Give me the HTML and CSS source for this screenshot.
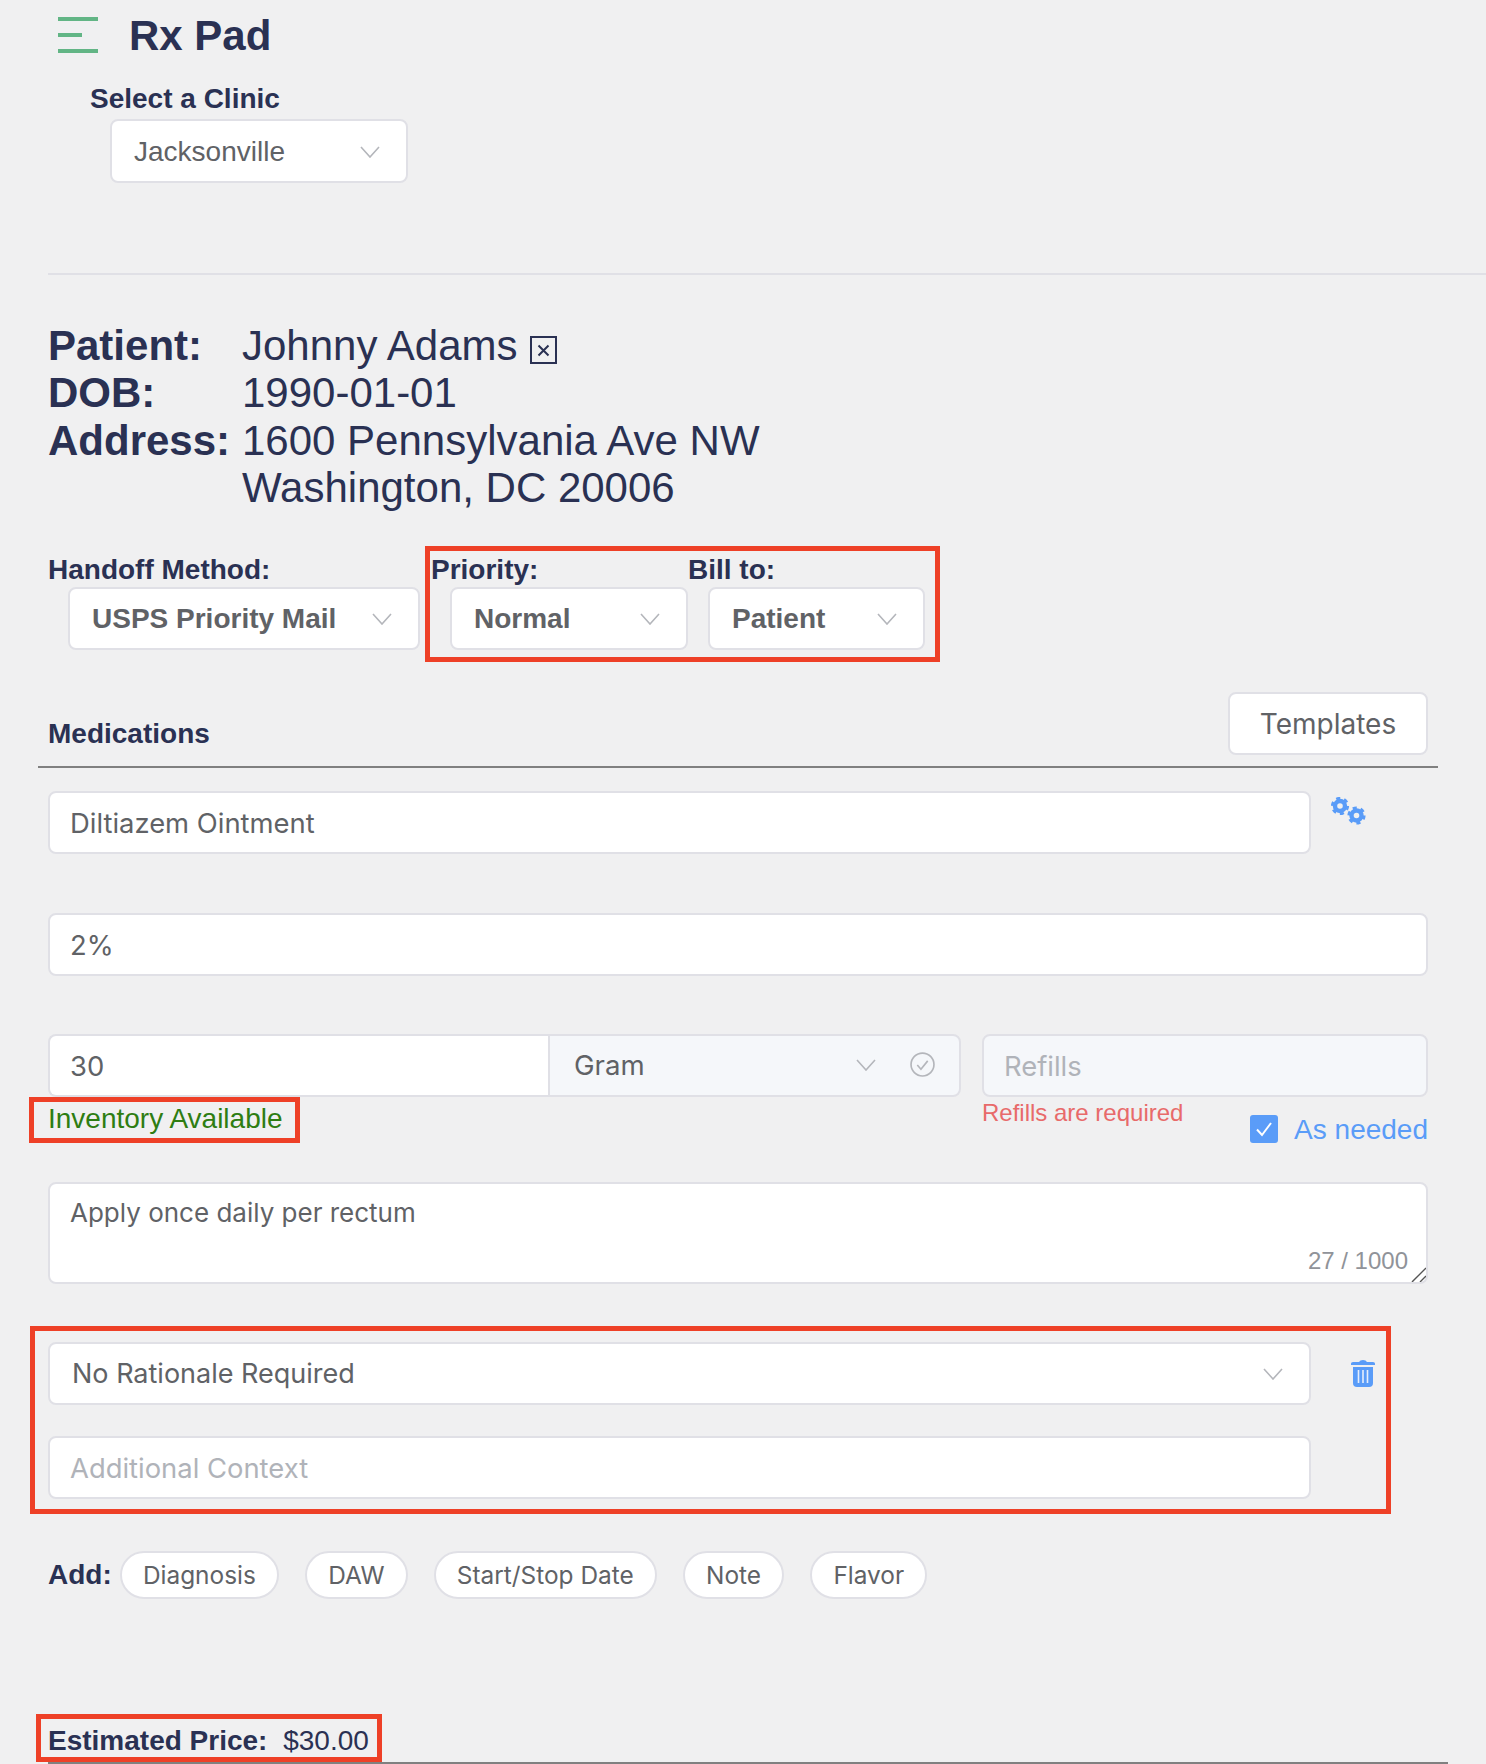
FILE: index.html
```html
<!DOCTYPE html>
<html lang="en">
<head>
    <meta charset="UTF-8">
    <meta name="viewport" content="width=device-width, initial-scale=1.0">
    <title>Rx Pad</title>
    <link rel="stylesheet" href="styles.css">
</head>
<body>
    <div class="page">
        <div class="topbar">
            <svg class="menu-icon" width="40" height="36" viewBox="0 0 40 36">
                <rect x="0" y="0" width="40" height="4" fill="#62b585"/>
                <rect x="0" y="16" width="24" height="4" fill="#62b585"/>
                <rect x="0" y="32" width="40" height="4" fill="#62b585"/>
            </svg>
            <h1>Rx Pad</h1>
        </div>

        <div class="clinic-label">Select a Clinic</div>
        <div class="select clinic-select">
            <span>Jacksonville</span>
            <svg class="chevron" viewBox="0 0 20 12"><path d="M1 1l9 10 9-10"/></svg>
        </div>

        <div class="divider"></div>

        <div class="patient">
            <div class="patient-key">Patient:</div>
            <div class="patient-val">Johnny Adams
                <svg class="close-box" width="27" height="28" viewBox="0 0 27 28">
                    <rect x="1" y="1" width="25" height="26" fill="none" stroke="#2a3153" stroke-width="2"/>
                    <path d="M8.500 9.500l10 10m0-10l-10 10" stroke="#2a3153" stroke-width="2"/>
                </svg>
            </div>
            <div class="patient-key">DOB:</div>
            <div class="patient-val">1990-01-01</div>
            <div class="patient-key">Address:</div>
            <div class="patient-val">1600 Pennsylvania Ave NW<br>Washington, DC 20006</div>
        </div>

        <div class="order-row">
            <div class="order-col handoff">
                <label>Handoff Method:</label>
                <div class="select bold-select">
                    <span>USPS Priority Mail</span>
                    <svg class="chevron" viewBox="0 0 20 12"><path d="M1 1l9 10 9-10"/></svg>
                </div>
            </div>
            <div class="order-col priority">
                <label>Priority:</label>
                <div class="select bold-select">
                    <span>Normal</span>
                    <svg class="chevron" viewBox="0 0 20 12"><path d="M1 1l9 10 9-10"/></svg>
                </div>
            </div>
            <div class="order-col bill">
                <label>Bill to:</label>
                <div class="select bold-select">
                    <span>Patient</span>
                    <svg class="chevron" viewBox="0 0 20 12"><path d="M1 1l9 10 9-10"/></svg>
                </div>
            </div>
        </div>

        <div class="med-header">
            <span class="med-title">Medications</span>
            <button class="templates">Templates</button>
        </div>

        <div class="form-row first-row">
            <div class="input wide">Diltiazem Ointment</div>
            <svg class="gears" width="36" height="29" viewBox="0 0 36 29">
                <g fill="none" stroke="#5a9cf8">
                    <circle cx="9" cy="9" r="5" stroke-width="4.4"/>
                    <circle cx="9" cy="9" r="7.6" stroke-width="3" stroke-dasharray="4 3.96"/>
                    <circle cx="25.5" cy="18.5" r="5" stroke-width="4.4"/>
                    <circle cx="25.5" cy="18.5" r="7.6" stroke-width="3" stroke-dasharray="4 3.96"/>
                </g>
            </svg>
        </div>

        <div class="input strength">2%</div>

        <div class="qty-row">
            <div class="qty-left">
                <div class="qty-group">
                    <div class="input qty">30</div>
                    <div class="select unit">
                        <span>Gram</span>
                        <svg class="chevron" viewBox="0 0 20 12"><path d="M1 1l9 10 9-10"/></svg>
                        <svg class="check-circle" width="25" height="25" viewBox="0 0 24 24">
                            <circle cx="12" cy="12" r="11" fill="none" stroke="#b4b6bb" stroke-width="1.6"/>
                            <path d="M7 12.5l3.5 4 6.5-8" fill="none" stroke="#b4b6bb" stroke-width="1.6"/>
                        </svg>
                    </div>
                </div>
                <div class="inventory">Inventory Available</div>
            </div>
            <div class="qty-right">
                <div class="input refills">Refills</div>
                <div class="refills-foot">
                    <div class="error">Refills are required</div>
                    <div class="as-needed">
                        <span class="checkbox">
                            <svg width="18" height="16" viewBox="0 0 18 16"><path d="M2 8.5l5 5.5 9-12" fill="none" stroke="#fff" stroke-width="2"/></svg>
                        </span>
                        <span>As needed</span>
                    </div>
                </div>
            </div>
        </div>

        <div class="input notes">
            Apply once daily per rectum
            <span class="counter">27 / 1000</span>
            <svg class="resize" width="15" height="15" viewBox="0 0 15 15">
                <path d="M1 15L15 1M9 15l6-6" stroke="#555" stroke-width="1.4"/>
            </svg>
        </div>

        <div class="form-row rationale-row">
            <div class="select wide rationale">
                <span>No Rationale Required</span>
                <svg class="chevron" viewBox="0 0 20 12"><path d="M1 1l9 10 9-10"/></svg>
            </div>
            <svg class="trash" width="24" height="28" viewBox="0 0 24 28">
                <path d="M0 4.5Q0 3 2 3h6Q9 1 12 1t4 2h6q2 0 2 1.500V6H0z" fill="#5a9cf8"/>
                <path d="M2 8h20v16q0 4-4 4H6q-4 0-4-4z" fill="#5a9cf8"/>
                <path d="M7.500 11v13M12 11v13M16.500 11v13" stroke="#e6eefc" stroke-width="1.600"/>
            </svg>
        </div>

        <div class="input wide context">Additional Context</div>

        <div class="add-row">
            <span class="add-label">Add:</span>
            <span class="pill">Diagnosis</span>
            <span class="pill">DAW</span>
            <span class="pill">Start/Stop Date</span>
            <span class="pill">Note</span>
            <span class="pill">Flavor</span>
        </div>

        <div class="price"><b>Estimated Price:</b> <span>$30.00</span></div>

        <!-- red review boxes drawn over the form -->
        <div class="mark mark-order"></div>
        <div class="mark mark-inventory"></div>
        <div class="mark mark-rationale"></div>
        <div class="mark mark-price"></div>
    </div>
</body>
</html>
```

FILE: styles.css
```css
* {
    box-sizing: border-box;
}

html, body {
    margin: 0;
    padding: 0;
    background-color: #f0f0f1;
}

body {
    font-family: "Liberation Sans", Arial, sans-serif;
    color: #2a3153;
    overflow: hidden;
}

.page {
    position: relative;
    width: 1486px;
    height: 1764px;
    overflow: hidden;
}

.topbar {
    display: flex;
    align-items: center;
    gap: 31px;
    height: 36px;
    margin: 17px 0 0 58px;
}

h1 {
    margin: 0;
    padding-top: 2px;
    font-size: 42px;
    line-height: 36px;
    font-weight: bold;
}

.clinic-label {
    margin: 30px 0 0 90px;
    font-size: 28px;
    line-height: 32px;
    font-weight: bold;
}

/* inputs and selects */
.select, .input {
    height: 63px;
    background-color: #fff;
    border: 2px solid #e0e0e6;
    border-radius: 8px;
    font-size: 28px;
    color: #606266;
}

.select {
    display: flex;
    align-items: center;
    justify-content: space-between;
    padding: 0 26px 0 22px;
}

.input {
    display: flex;
    align-items: center;
    padding: 0 20px;
    font-family: Inter, sans-serif;
    font-size: 27.4px;
}

.chevron {
    width: 20px;
    height: 12px;
    flex: none;
}

.chevron path {
    fill: none;
    stroke: #b4b6bb;
    stroke-width: 1.6;
}

.clinic-select {
    width: 298px;
    height: 64px;
    margin: 4px 0 0 110px;
    padding-top: 2px;
}

.divider {
    height: 2px;
    margin: 90px 0 0 48px;
    background-color: #e0e0e6;
}

.patient {
    display: grid;
    grid-template-columns: 194px 1fr;
    margin: 47px 0 0 48px;
    font-size: 42px;
    line-height: 47.3px;
}

.patient-key {
    font-weight: bold;
}

.close-box {
    margin-left: 1px;
    vertical-align: -4px;
}

.order-row {
    display: flex;
    margin-top: 43px;
}

.order-col label {
    display: block;
    font-size: 28px;
    line-height: 32px;
    font-weight: bold;
}

.order-col .select {
    margin-top: 1px;
}

.bold-select {
    font-weight: bold;
}

.handoff {
    margin-left: 48px;
}

.handoff .select {
    width: 352px;
    margin-left: 20px;
}

.priority {
    margin-left: 11px;
}

.priority .select {
    width: 238px;
    margin-left: 19px;
}

.bill {
    margin-left: 0;
}

.bill .select {
    width: 217px;
    margin-left: 20px;
}

.med-header {
    display: flex;
    justify-content: space-between;
    align-items: flex-end;
    width: 1400px;
    margin: 42px 0 0 38px;
    padding: 0 10px 11px 10px;
    border-bottom: 2px solid #808080;
}

.med-title {
    font-size: 28px;
    line-height: 32px;
    font-weight: bold;
    margin-bottom: 5px;
}

.templates {
    width: 200px;
    height: 63px;
    background-color: #fff;
    border: 2px solid #e0e0e6;
    border-radius: 8px;
    font-family: Inter, sans-serif;
    font-size: 28px;
    color: #606266;
}

.form-row {
    display: flex;
    margin-left: 48px;
}

.wide {
    width: 1263px;
}

.first-row {
    margin-top: 23px;
}

.gears {
    margin: 6px 0 0 20px;
}

.strength {
    width: 1380px;
    margin: 59px 0 0 48px;
}

.qty-row {
    display: flex;
    gap: 21px;
    margin: 58px 0 0 48px;
}

.qty-left {
    width: 913px;
}

.qty-group {
    display: flex;
}

.qty {
    width: 500px;
    border-radius: 8px 0 0 8px;
    border-right: 0;
}

.unit {
    width: 413px;
    justify-content: flex-start;
    padding: 0 24px 2px 24px;
    background-color: #f5f7fa;
    border-radius: 0 8px 8px 0;
    font-family: Inter, sans-serif;
    font-size: 27.6px;
}

.unit span {
    flex: 1;
}

.unit .chevron {
    margin-right: 34px;
}

.inventory {
    margin-top: 6px;
    font-size: 28px;
    line-height: 32px;
    color: #2e7d12;
}

.qty-right {
    width: 446px;
}

.refills {
    background-color: #f5f7fa;
    color: #b0b3b9;
}

.refills-foot {
    display: flex;
    justify-content: space-between;
    align-items: flex-start;
}

.error {
    margin-top: 2px;
    font-size: 24px;
    line-height: 28px;
    color: #e86a6a;
}

.as-needed {
    display: flex;
    align-items: center;
    gap: 16px;
    margin-top: 18px;
    height: 28px;
    font-size: 28px;
    color: #5a9cf8;
}

.as-needed span:last-child {
    padding-top: 2px;
}

.checkbox {
    display: flex;
    align-items: center;
    justify-content: center;
    width: 28px;
    height: 28px;
    background-color: #5a9cf8;
    border-radius: 3px;
}

.notes {
    position: relative;
    align-items: flex-start;
    width: 1380px;
    height: 102px;
    margin: 39px 0 0 48px;
    padding-top: 13px;
    font-size: 26px;
}

.counter {
    position: absolute;
    right: 18px;
    bottom: 7px;
    font-family: "Liberation Sans", Arial, sans-serif;
    font-size: 24px;
    line-height: 28px;
    color: #909399;
}

.resize {
    position: absolute;
    right: 0;
    bottom: 0;
}

.rationale-row {
    margin-top: 58px;
}

.rationale {
    font-family: Inter, sans-serif;
    font-size: 27px;
}

.trash {
    margin: 17px 0 0 40px;
}

.context {
    margin: 31px 0 0 48px;
    color: #b0b3b9;
}

.add-row {
    display: flex;
    align-items: center;
    gap: 26px;
    margin: 52px 0 0 48px;
}

.add-label {
    margin-right: -18px;
    font-size: 28px;
    font-weight: bold;
}

.pill {
    display: flex;
    align-items: center;
    height: 48px;
    padding: 0 21.2px;
    background-color: #fff;
    border: 2px solid #e0e0e6;
    border-radius: 24px;
    font-family: Inter, sans-serif;
    font-size: 24.4px;
    color: #606266;
}

.price {
    width: 1400px;
    height: 39px;
    margin: 126px 0 0 48px;
    border-bottom: 2px solid #808080;
    font-size: 28px;
    line-height: 32px;
}

.price span {
    margin-left: 8px;
}

/* review marks */
.mark {
    position: absolute;
    border: 5px solid #ee4027;
}

.mark-order {
    left: 425px;
    top: 546px;
    width: 515px;
    height: 116px;
}

.mark-inventory {
    left: 29px;
    top: 1097px;
    width: 271px;
    height: 46px;
}

.mark-rationale {
    left: 30px;
    top: 1326px;
    width: 1361px;
    height: 188px;
}

.mark-price {
    left: 36px;
    top: 1714px;
    width: 346px;
    height: 48px;
}
```
